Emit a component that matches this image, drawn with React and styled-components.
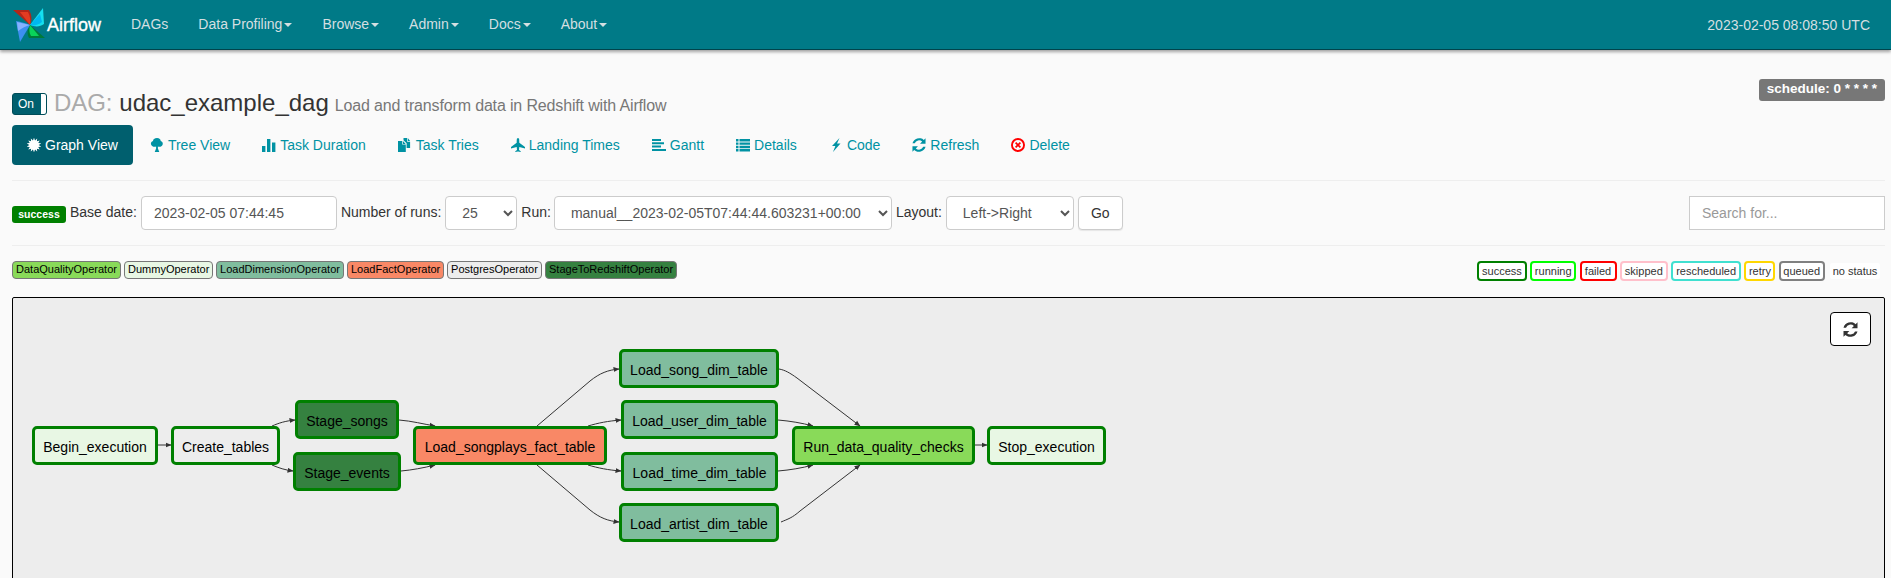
import React from "react";
import styled, { createGlobalStyle } from "styled-components";

const Global = createGlobalStyle`
  html, body { margin: 0; padding: 0; height: 100%; overflow: hidden; background: #fafafa; }
  body { font-family: "Liberation Sans", Arial, sans-serif; font-size: 14px; line-height: 20px; color: #333; }
  * { box-sizing: border-box; }
`;

const Navbar = styled.nav`
  height: 50px; background: #007a87; border-bottom: 1px solid #00444c;
  box-shadow: 0 2px 3px rgba(0,0,0,.35);
  display: flex; align-items: center; padding: 0 21px 0 12px; position: relative;
`;
const Brand = styled.a`
  display: flex; align-items: center; width: 104px; color: #fff; font-size: 18px; font-weight: 400;
  -webkit-text-stroke: .35px #fff;
  svg { margin-right: 1px; }
`;
const NavItem = styled.a`
  color: #d4dfe1; padding: 0 15px; display: inline-flex; align-items: center; line-height: 49px;
`;
const Caret = styled.span`
  width: 0; height: 0; margin-left: 2px; border-top: 4px solid #d4dfe1; border-left: 4px solid transparent; border-right: 4px solid transparent;
`;
const Clock = styled.span`
  margin-left: auto; color: #d4dfe1;
`;
const Main = styled.main`
  padding: 29px 6px 0 12px;
`;
const TitleRow = styled.div`
  display: flex; align-items: flex-start; justify-content: space-between; height: 46px;
`;
const Title = styled.div`
  display: flex; align-items: center; margin-top: 14px; height: 22px;
`;
const Toggle = styled.span`
  width: 35px; height: 22px; background: #005f6e; border-radius: 3px; border: 1px solid #004c58;
  display: flex; align-items: center; color: #fff; font-size: 12px; padding-left: 5px; position: relative; margin-right: 7px;
  &::after { content: ""; position: absolute; right: 0; top: 0; bottom: 0; width: 5px; background: #fff; border-radius: 0 2px 2px 0; }
`;
const DagWord = styled.span`
  font-size: 24px; color: #aaa; margin: -2px 7px 0 0; letter-spacing: -.1px;
`;
const DagName = styled.span`
  font-size: 24px; color: #333; margin: -2px 6px 0 0;
`;
const DagDesc = styled.span`
  font-size: 16px; color: #777; margin-top: 3px; letter-spacing: -.15px;
`;
const Schedule = styled.span`
  background: #777; color: #fff; font-weight: 700; font-size: 13.5px; line-height: 18px; height: 22px;
  padding: 1px 8px; border-radius: 3px; white-space: nowrap;
`;
const Tabs = styled.div`
  display: flex; gap: 2px; height: 40px;
`;
const Tab = styled.a`
  display: inline-flex; align-items: center; gap: 4px; padding: 0 15px; border-radius: 4px;
  color: ${p => (p.$active ? "#fff" : "#0092a3")};
  background: ${p => (p.$active ? "#005f6e" : "transparent")};
`;
const Rule = styled.hr`
  margin: ${p => p.$top || 0}px 0 0; border: 0; border-top: 1px solid #eee; height: 1px;
`;
const Controls = styled.div`
  display: flex; align-items: center; margin-top: 15px; height: 34px;
`;
const StatusBadge = styled.span`
  background: #008000; color: #fff; font-weight: 700; font-size: 10.5px; line-height: 16px; height: 17px;
  padding: 0 6px; border-radius: 3px; margin-right: 4px; margin-top: 3px; width: 54px; text-align: center;
`;
const FieldLabel = styled.label`
  margin: -3px ${p => p.$after ?? 4}px 0 0; white-space: nowrap; color: #333;
`;
const Field = styled.input`
  width: ${p => p.$w}px; height: 34px; border: 1px solid #ccc; border-radius: ${p => p.$square ? 0 : 4}px;
  padding: 6px 12px; font: 14px "Liberation Sans", Arial, sans-serif; color: #555; background: #fff; margin-right: 4px;
  &::placeholder { color: #999; opacity: 1; }
  ${p => p.$push && "margin-left: auto; margin-right: 0;"}
`;
const Select = styled.select`
  width: ${p => p.$w}px; height: 34px; border: 1px solid #ccc; border-radius: 4px; padding: 6px 12px;
  font: 14px "Liberation Sans", Arial, sans-serif; color: #555; background: #fff; margin-right: 4px;
`;
const GoButton = styled.button`
  width: 45px; height: 34px; border: 1px solid #ccc; border-radius: 4px; background: #fff; color: #333;
  font: 14px "Liberation Sans", Arial, sans-serif; box-shadow: 0 1px 1px rgba(0,0,0,.08); padding: 0;
`;
const LegendRow = styled.div`
  display: flex; justify-content: space-between; align-items: flex-start; margin-top: 15px; height: 36px;
`;
const LegendGroup = styled.div`
  display: flex; gap: ${p => p.$gap}px; padding-right: ${p => p.$end || 0}px;
`;
const OpChip = styled.span`
  background: ${p => p.$bg}; border: 1px solid #777; border-radius: 4px; height: 18px; line-height: 15px;
  font-size: 11px; color: #000; padding: 0 3px; white-space: nowrap; text-align: center; width: ${p => p.$w}px;
`;
const StateChip = styled.span`
  background: #fff; border: 2px solid ${p => p.$color}; border-radius: 4px; height: 20px; line-height: 16px;
  font-size: 11px; color: #333; white-space: nowrap; text-align: center; width: ${p => p.$w}px;
`;
const Panel = styled.section`
  position: relative; height: 340px; background: #ededed; border: 1px solid #000; border-radius: 2px 2px 0 0; overflow: hidden;
`;
const RefreshBtn = styled.button`
  position: absolute; left: 1817px; top: 14px; width: 41px; height: 34px; border: 1px solid #000; border-radius: 4px;
  background: #fff; display: flex; align-items: center; justify-content: center; padding: 0;
`;
const Edges = styled.svg`
  position: absolute; left: 0; top: 0; width: 100%; height: 100%;
`;
const Node = styled.div`
  position: absolute; left: ${p => p.$x}px; top: ${p => p.$y}px; width: ${p => p.$w}px; height: ${p => p.$h}px;
  background: ${p => p.$bg}; border: 3px solid #008000; border-radius: 5px; color: #000;
  display: flex; align-items: center; justify-content: center; padding-top: 3px; white-space: nowrap;
`;

const Glyph = ({ children, color = "currentColor", size = 14, box = "0 0 14 14" }) => (
  <svg width={size} height={size} viewBox={box} fill={color}>{children}</svg>
);

const REFRESH_D = "M12.6 1.2v4.7H7.9l1.8-1.8A3.9 3.9 0 0 0 3.4 5.500H1.4A5.900 5.900 0 0 1 11.100 2.700zM1.400 12.800V8.100h4.700L4.300 9.900a3.900 3.900 0 0 0 6.300-1.400h2A5.900 5.900 0 0 1 2.900 11.300z";

const STAR_D =
  "M" +
  Array.from({ length: 28 }, (_, i) => {
    const r = i % 2 ? 4.7 : 7.3;
    const a = (i * Math.PI) / 14;
    return `${(7 + r * Math.sin(a)).toFixed(2)} ${(7 - r * Math.cos(a)).toFixed(2)}`;
  }).join("L") +
  "z";

const icons = {
  graph: (
    <Glyph><path d={STAR_D} /></Glyph>
  ),
  tree: (
    <Glyph><path d="M7 0c2.500 0 3.700 1.500 3.700 2.900 1.500.4 2.100 1.600 2.100 2.800 0 2-1.700 3.100-3.700 3.100-.3 0-.8-.1-1.200-.3v2l1.400 3.500H4.700l1.400-3.500v-2c-.4.2-.8.300-1.200.3-2.100 0-4-1-4-3.100 0-1.200.7-2.400 2.100-2.800C3 1.500 4.500 0 7 0z" /></Glyph>
  ),
  chart: (
    <Glyph><path d="M0 8h3.400v6H0zM5 1h3.400v13H5zM10 4.500h3.400V14H10z" /></Glyph>
  ),
  dup: (
    <Glyph><path d="M0 3h4.200v3.600h3.600V14H0zM4.900 3l2.800 2.900H4.900zM5.500 0h3.600v3.700h3V10H8.600V5.300L5.500 2.200zM9.800.1l2.300 2.900H9.800z" /></Glyph>
  ),
  plane: (
    <Glyph><path d="M6 .5C6.300 0 7.700 0 8 .5c.3.600.3 3 .3 4.300L14 9v1.600L8.300 9l-.3 3 1.700 1.200V14L7 13.400 4.300 14v-.8L6 12l-.3-3L0 10.600V9l5.700-4.200C5.700 3.500 5.700 1.100 6 .5z" /></Glyph>
  ),
  gantt: (
    <Glyph><path d="M0 1h9v2H0zM0 4.300h12v2H0zM0 7.600h9v2H0zM0 11h14v2H0z" /></Glyph>
  ),
  list: (
    <Glyph><path d="M0 1h2.500v2.400H0zM3.500 1H14v2.400H3.500zM0 4.400h2.500v2.400H0zM3.500 4.400H14v2.400H3.500zM0 7.800h2.500v2.400H0zM3.500 7.800H14v2.400H3.500zM0 11.100h2.500v2.400H0zM3.500 11.100H14v2.400H3.500z" /></Glyph>
  ),
  flash: (
    <Glyph><path d="M10.500 0L3 8h3.400L4 14l7.500-8.600H8z" /></Glyph>
  ),
  refresh: (
    <Glyph box="1 1 12 12"><path d={REFRESH_D} /></Glyph>
  ),
  remove: (
    <Glyph color="#f00"><path fillRule="evenodd" d="M7 0a7 7 0 1 1 0 14A7 7 0 0 1 7 0zm0 1.900a5.100 5.100 0 1 0 0 10.200A5.100 5.100 0 0 0 7 1.900zM5.200 4l1.800 1.800L8.800 4 10 5.200 8.200 7 10 8.800 8.800 10 7 8.200 5.200 10 4 8.800 5.800 7 4 5.200z" /></Glyph>
  ),
};

const Logo = () => (
  <svg width="34" height="36" viewBox="0 0 34 36">
    <path d="M18 18L1 3h16c3 5 3 10 1 15z" fill="#b3261a" />
    <path d="M18 18L8 5h8c2 4 3 8 2 13z" fill="#e33b22" />
    <path d="M18 18L31 1l1 16c-4 3-9 3-14 1z" fill="#15e0ef" />
    <path d="M18 18L28 7l2 8c-4 3-8 4-12 3z" fill="#00b8f0" />
    <path d="M18 18l15 13H17c-2-4-2-8 1-13z" fill="#007a3a" />
    <path d="M18 18l9 11h-8c-2-3-2-7-1-11z" fill="#09d35a" />
    <path d="M18 18L8 35 4 14c5 1 10 2 14 4z" fill="#3d8ff0" />
    <path d="M18 18L5 15l1 9c4-3 8-5 12-6z" fill="#86b2ff" />
  </svg>
);

const navItems = ["Data Profiling", "Browse", "Admin", "Docs", "About"];

const tabs = [
  ["graph", "Graph View", true],
  ["tree", "Tree View"],
  ["chart", "Task Duration"],
  ["dup", "Task Tries"],
  ["plane", "Landing Times"],
  ["gantt", "Gantt"],
  ["list", "Details"],
  ["flash", "Code"],
  ["refresh", "Refresh"],
  ["remove", "Delete"],
];

const ops = [
  ["DataQualityOperator", "#89DA59", 109],
  ["DummyOperator", "#e8f7e4", 89],
  ["LoadDimensionOperator", "#80BD9E", 128],
  ["LoadFactOperator", "#F98866", 97],
  ["PostgresOperator", "#ededed", 95],
  ["StageToRedshiftOperator", "#358140", 132],
];

const states = [
  ["success", "#008000", 50],
  ["running", "#00ff00", 46],
  ["failed", "#ff0000", 37],
  ["skipped", "#ffc0cb", 48],
  ["rescheduled", "#40e0d0", 70],
  ["retry", "#ffd700", 31],
  ["queued", "#808080", 46],
  ["no status", "#fafafa", 54],
];

const OX = 12;
const OY = 298;
const nodes = [
  ["Begin_execution", 32, 426, 126, 39, "#e8f7e4"],
  ["Create_tables", 171, 426, 109, 39, "#ededed"],
  ["Stage_songs", 295, 400, 104, 39, "#358140"],
  ["Stage_events", 293, 452, 108, 39, "#358140"],
  ["Load_songplays_fact_table", 413, 426, 194, 39, "#F98866"],
  ["Load_song_dim_table", 619, 349, 160, 39, "#80BD9E"],
  ["Load_user_dim_table", 621, 400, 157, 39, "#80BD9E"],
  ["Load_time_dim_table", 621, 452, 157, 39, "#80BD9E"],
  ["Load_artist_dim_table", 619, 503, 160, 39, "#80BD9E"],
  ["Run_data_quality_checks", 792, 426, 183, 39, "#89DA59"],
  ["Stop_execution", 987, 426, 119, 39, "#e8f7e4"],
];

const edges = [
  "M158 445 L171 445",
  "M272 426 C279 423 285 421 295 420",
  "M272 465 C279 468 285 470 293 471",
  "M399 420 C412 421 423 424 435 426",
  "M401 471 C412 470 423 468 435 465",
  "M537 426 L590 381 C600 373 608 370 619 369",
  "M588 426 C598 423 608 421 621 420",
  "M588 465 C598 468 608 470 621 471",
  "M537 465 L590 510 C600 518 608 521 619 522",
  "M779 369 C785 370 790 373 797 378 L860 426",
  "M778 420 C790 421 802 423 813 426",
  "M778 471 C790 470 802 468 813 465",
  "M781 522 C788 519 792 518 800 511 L860 465",
  "M975 445 L987 445",
];

export default function App() {
  return (
    <>
      <Global />
      <Navbar>
        <Brand><Logo />Airflow</Brand>
        <NavItem>DAGs</NavItem>
        {navItems.map(n => (
          <NavItem key={n}>{n}<Caret /></NavItem>
        ))}
        <Clock>2023-02-05 08:08:50 UTC</Clock>
      </Navbar>
      <Main>
        <TitleRow>
          <Title>
            <Toggle>On</Toggle>
            <DagWord>DAG:</DagWord>
            <DagName>udac_example_dag</DagName>
            <DagDesc>Load and transform data in Redshift with Airflow</DagDesc>
          </Title>
          <Schedule>schedule: 0 * * * *</Schedule>
        </TitleRow>
        <Tabs>
          {tabs.map(([icon, label, active]) => (
            <Tab key={label} $active={active}>{icons[icon]}{label}</Tab>
          ))}
        </Tabs>
        <Rule $top={15} />
        <Controls>
          <StatusBadge>success</StatusBadge>
          <FieldLabel>Base date:</FieldLabel>
          <Field $w={196} defaultValue="2023-02-05 07:44:45" />
          <FieldLabel>Number of runs:</FieldLabel>
          <Select $w={72} defaultValue="25"><option>25</option></Select>
          <FieldLabel $after={3}>Run:</FieldLabel>
          <Select $w={338} defaultValue="m"><option value="m">manual__2023-02-05T07:44:44.603231+00:00</option></Select>
          <FieldLabel>Layout:</FieldLabel>
          <Select $w={128} defaultValue="lr"><option value="lr">Left-&gt;Right</option></Select>
          <GoButton>Go</GoButton>
          <Field $w={196} $square $push placeholder="Search for..." />
        </Controls>
        <Rule $top={15} />
        <LegendRow>
          <LegendGroup $gap={3}>
            {ops.map(([t, c, w]) => <OpChip key={t} $bg={c} $w={w}>{t}</OpChip>)}
          </LegendGroup>
          <LegendGroup $gap={3.3} $end={3}>
            {states.map(([t, c, w]) => <StateChip key={t} $color={c} $w={w}>{t}</StateChip>)}
          </LegendGroup>
        </LegendRow>
        <Panel>
          <Edges>
            <defs>
              <marker id="arrow" markerWidth="6" markerHeight="6" refX="5.500" refY="3" orient="auto">
                <path d="M0 0.500L6 3L0 5.500z" fill="#333" />
              </marker>
            </defs>
            <g transform={`translate(${-OX - 1} ${-OY})`} fill="none" stroke="#333" strokeWidth="1">
              {edges.map(d => <path key={d} d={d} markerEnd="url(#arrow)" />)}
            </g>
          </Edges>
          {nodes.map(([t, x, y, w, h, bg]) => (
            <Node key={t} $x={x - OX - 1} $y={y - OY} $w={w} $h={h} $bg={bg}>{t}</Node>
          ))}
          <RefreshBtn aria-label="Refresh">
            <Glyph color="#333" size={15} box="1 1 12 12"><path d={REFRESH_D} /></Glyph>
          </RefreshBtn>
        </Panel>
      </Main>
    </>
  );
}
